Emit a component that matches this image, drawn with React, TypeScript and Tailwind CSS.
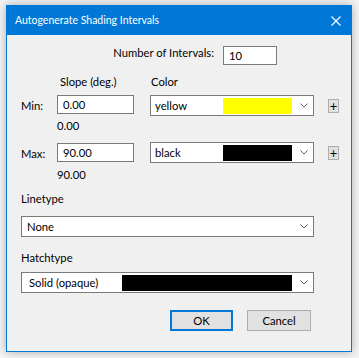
import React from "react";

const font = { fontFamily: 'Lato, "Noto Sans", sans-serif' };

function Chevron() {
  return (
    <svg width="8" height="5" viewBox="0 0 8 5" className="shrink-0">
      <path d="M0.5 0.5 L4 4 L7.5 0.5" fill="none" stroke="#606060" strokeWidth="1" />
    </svg>
  );
}

function ColorSelect({ label, color }: { label: string; color: string }) {
  return (
    <div className="ml-[16px] flex h-[21px] w-[164px] items-center border border-[#7a7a7a] bg-white pl-[4px] pr-[5px]">
      <span className="flex-1 text-black">{label}</span>
      <div className="h-[16px] w-[69px]" style={{ background: color }} />
      <div className="ml-[8px]">
        <Chevron />
      </div>
    </div>
  );
}

function PlusButton() {
  return (
    <div className="ml-[14px] mt-[4px] flex h-[14px] w-[11px] items-center justify-center border border-[#adadad] bg-[#e1e1e1] text-[13px] leading-none text-black">
      +
    </div>
  );
}

export default function App() {
  return (
    <div className="min-h-screen bg-[#f4f4f4] pl-[6px] pt-[5px]" style={font}>
      <div className="flex h-[347px] w-[346px] flex-col border border-[#0078d7] bg-[#f0f0f0] shadow-[0_0_9px_rgba(0,0,0,0.3)]">
        {/* Title bar */}
        <div className="flex h-[29px] shrink-0 items-center bg-[#0078d7] pl-[8px] pr-[10px]">
          <span className="flex-1 text-[10.5px] text-white">Autogenerate Shading Intervals</span>
          <svg width="10" height="10" viewBox="0 0 10 10">
            <path d="M0.5 0.5 L9.5 9.5 M9.5 0.5 L0.5 9.5" stroke="white" strokeWidth="1.1" />
          </svg>
        </div>

        <div className="flex flex-col text-[11.25px] leading-[16px] text-black">
          {/* Number of intervals */}
          <div className="mt-[11px] flex h-[19px] items-start">
            <span className="-mt-[1px] w-[207px] text-right">Number of Intervals:</span>
            <div className="ml-[9px] flex h-[19px] w-[54px] items-center border border-[#7a7a7a] bg-white pl-[5px]">
              10
            </div>
          </div>

          {/* Headers */}
          <div className="mt-[9px] flex h-[16px] pl-[53px]">
            <span className="w-[91px]">Slope (deg.)</span>
            <span>Color</span>
          </div>

          {/* Min */}
          <div className="mt-[5px] flex h-[21px] items-start pl-[14px]">
            <span className="mt-[3px] w-[36px]">Min:</span>
            <div className="flex h-[19px] w-[77px] items-center border border-[#7a7a7a] bg-white pl-[5px]">0.00</div>
            <ColorSelect label="yellow" color="#ffff00" />
            <PlusButton />
          </div>
          <div className="mt-[2px] h-[16px] pl-[50px]">0.00</div>

          {/* Max */}
          <div className="mt-[8px] flex h-[21px] items-start pl-[14px]">
            <span className="mt-[4px] w-[36px]">Max:</span>
            <div className="mt-[1px] flex h-[19px] w-[77px] items-center border border-[#7a7a7a] bg-white pl-[5px]">90.00</div>
            <ColorSelect label="black" color="#000000" />
            <PlusButton />
          </div>
          <div className="mt-[4px] h-[16px] pl-[50px]">90.00</div>

          {/* Linetype */}
          <div className="mt-[8px] h-[16px] pl-[14px]">Linetype</div>
          <div className="ml-[14px] mt-[9px] flex h-[21px] w-[293px] items-center border border-[#7a7a7a] bg-white pl-[5px] pr-[5px]">
            <span className="flex-1">None</span>
            <Chevron />
          </div>

          {/* Hatchtype */}
          <div className="mt-[13px] h-[16px] pl-[14px]">Hatchtype</div>
          <div className="ml-[14px] mt-[6px] flex h-[21px] w-[293px] items-center border border-[#7a7a7a] bg-white pl-[7px] pr-[5px]">
            <span className="w-[93px]">Solid (opaque)</span>
            <div className="h-[16px] w-[171px] bg-black" />
            <div className="ml-[8px]">
              <Chevron />
            </div>
          </div>

          {/* Buttons */}
          <div className="mt-[17px] flex h-[21px] pl-[163px]">
            <button className="flex h-[21px] w-[63px] items-center justify-center border-2 border-[#0078d7] bg-[#e1e1e1]">
              OK
            </button>
            <button className="ml-[14px] flex h-[21px] w-[64px] items-center justify-center border border-[#adadad] bg-[#e1e1e1]">
              Cancel
            </button>
          </div>
        </div>
      </div>
    </div>
  );
}
